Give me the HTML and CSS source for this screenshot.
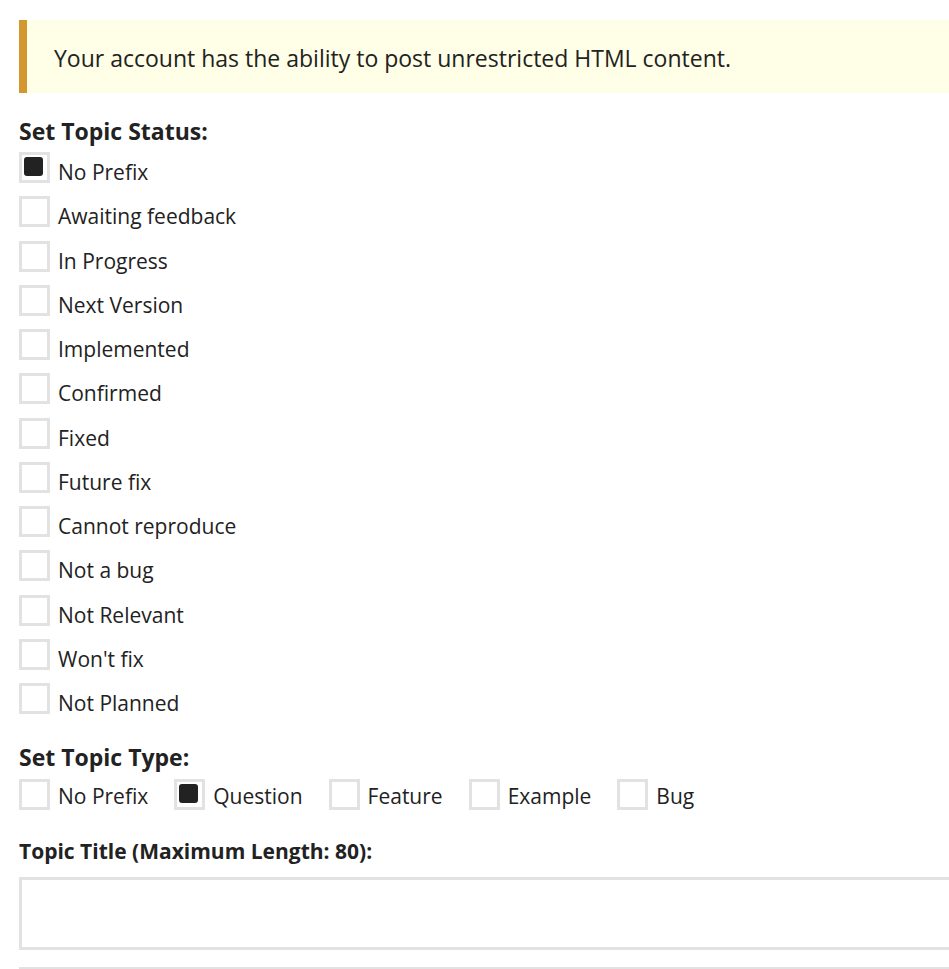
FILE: index.html
```html
<!DOCTYPE html>
<html lang="en">
<head>
<meta charset="utf-8">
<title>Post topic</title>
<link rel="stylesheet" href="styles.css">
</head>
<body>
<div class="page">
  <div class="notice">Your account has the ability to post unrestricted HTML content.</div>

  <div class="field-title">Set Topic Status:</div>
  <div class="status-list">
    <label class="check"><span class="box checked"></span><span class="text">No Prefix</span></label>
    <label class="check"><span class="box"></span><span class="text">Awaiting feedback</span></label>
    <label class="check"><span class="box"></span><span class="text">In Progress</span></label>
    <label class="check"><span class="box"></span><span class="text">Next Version</span></label>
    <label class="check"><span class="box"></span><span class="text">Implemented</span></label>
    <label class="check"><span class="box"></span><span class="text">Confirmed</span></label>
    <label class="check"><span class="box"></span><span class="text">Fixed</span></label>
    <label class="check"><span class="box"></span><span class="text">Future fix</span></label>
    <label class="check"><span class="box"></span><span class="text">Cannot reproduce</span></label>
    <label class="check"><span class="box"></span><span class="text">Not a bug</span></label>
    <label class="check"><span class="box"></span><span class="text">Not Relevant</span></label>
    <label class="check"><span class="box"></span><span class="text">Won't fix</span></label>
    <label class="check"><span class="box"></span><span class="text">Not Planned</span></label>
  </div>

  <div class="field-title type-title">Set Topic Type:</div>
  <div class="type-list">
    <label class="check"><span class="box"></span><span class="text">No Prefix</span></label>
    <label class="check"><span class="box checked"></span><span class="text">Question</span></label>
    <label class="check"><span class="box"></span><span class="text">Feature</span></label>
    <label class="check"><span class="box"></span><span class="text">Example</span></label>
    <label class="check"><span class="box"></span><span class="text">Bug</span></label>
  </div>

  <div class="small-title">Topic Title (Maximum Length: 80):</div>
  <div class="title-input"></div>
  <div class="next-input"></div>
</div>
</body>
</html>
```

FILE: styles.css
```css
html, body {
  margin: 0;
  padding: 0;
  background: #ffffff;
  overflow: hidden;
}

body {
  font-family: "Open Sans", "Noto Sans", sans-serif;
  color: #222222;
}

.page {
  width: 1000px;
  padding: 20px 0 0 19px;
}

.notice {
  height: 73px;
  box-sizing: border-box;
  background: #fffee6;
  border-left: 8px solid #d4962e;
  padding-left: 27px;
  display: flex;
  align-items: center;
  font-size: 23px;
  padding-top: 2px;
}

.field-title {
  font-weight: 700;
  font-size: 23px;
  line-height: 30px;
  margin-top: 23px;
}

.status-list {
  display: flex;
  flex-direction: column;
  margin-top: 6px;
}

.check {
  display: flex;
  align-items: flex-start;
  height: 44.25px;
  font-size: 21px;
}

.box {
  width: 31px;
  height: 31px;
  box-sizing: border-box;
  border: 3px solid #e2e2e2;
  background: #ffffff;
  flex: none;
  padding: 2px 4px 4px 2px;
}

.box.checked::before {
  content: "";
  display: block;
  width: 19px;
  height: 19px;
  background: #222222;
  border-radius: 3px;
}

.text {
  margin-left: 8px;
  line-height: 40px;
}

.type-title {
  margin-top: 15px;
}

.type-list {
  display: flex;
  margin-top: 7px;
}

.type-list .check {
  margin-right: 26px;
  height: 44px;
}

.type-list .text {
  margin-top: -3px;
}

.small-title {
  font-weight: 700;
  font-size: 21px;
  line-height: 28px;
  margin-top: 14px;
}

.title-input {
  margin-top: 12px;
  height: 73px;
  box-sizing: border-box;
  border: 3px solid #e2e2e2;
  background: #ffffff;
}

.next-input {
  margin-top: 17px;
  height: 40px;
  border-top: 3px solid #e2e2e2;
}
```
